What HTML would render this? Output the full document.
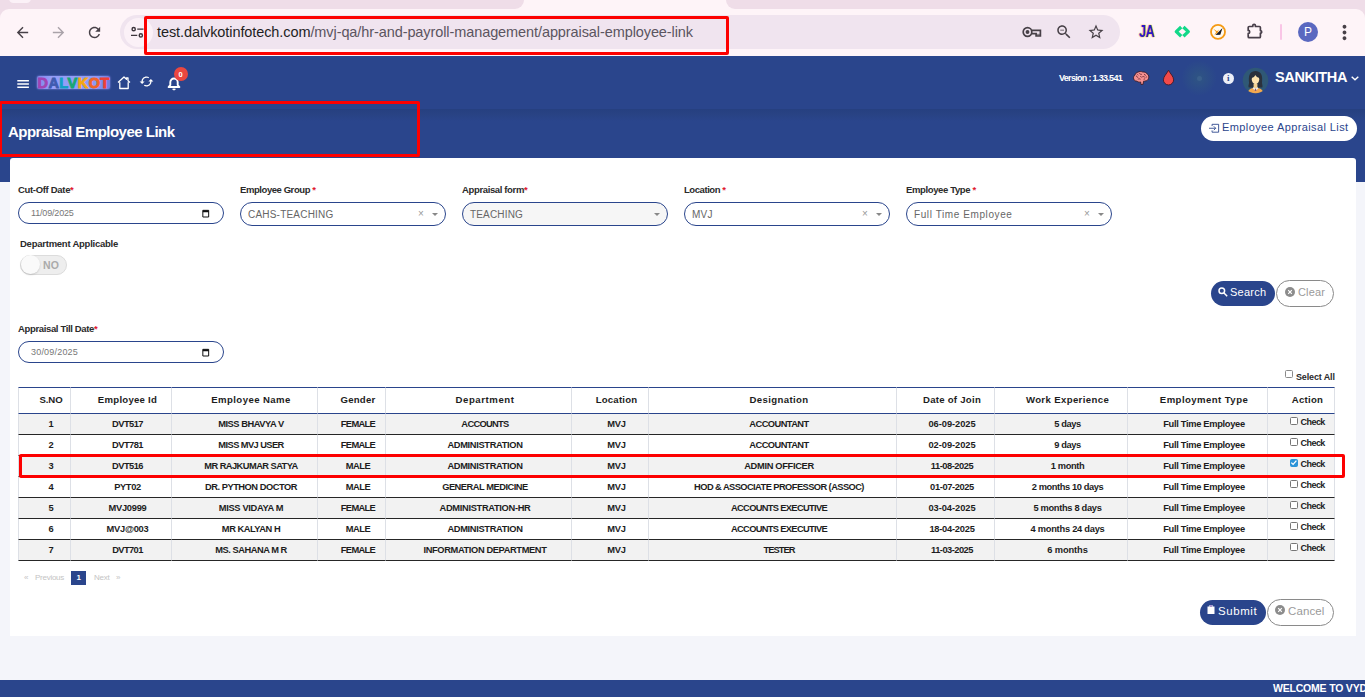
<!DOCTYPE html>
<html lang="en">
<head>
<meta charset="utf-8">
<title>Appraisal Employee Link</title>
<style>
*{box-sizing:border-box;margin:0;padding:0}
html,body{width:1365px;height:697px;overflow:hidden}
body{position:relative;background:#f4f5fa;font-family:"Liberation Sans",sans-serif;color:#222}
.abs{position:absolute}
.t{position:absolute;white-space:nowrap;line-height:1}
/* browser chrome */
#toolbar{left:0;top:9px;width:1365px;height:47px;background:#fef4f8;border-radius:9px 9px 0 0}
#pill{left:120px;top:15px;width:1000px;height:34px;border-radius:17px;background:#f0e4ef}
#siteinfo{left:123.500px;top:17.500px;width:29px;height:29px;border-radius:15px;background:#fbf1f7}
#url{left:157px;top:25px;font-size:14.5px;color:#1f1f1f;letter-spacing:0}
#url span{color:#5b5560}
/* app */
#apphdr{left:0;top:56px;width:1365px;height:52px;background:#2a458c}
#subhdr{left:0;top:108px;width:1365px;height:74px;background:#2a458c}
#shadow{left:0;top:108.500px;width:1365px;height:12px;background:linear-gradient(#264080,#284283 40%,#2a458c)}
#card{left:10px;top:158px;width:1346px;height:478px;background:#fff;border-radius:3px 3px 0 0}
#footer{left:0;top:680px;width:1365px;height:17px;background:#2a458c}

.ts{position:absolute;top:0;height:9px;background:#efdde8}
#tabbg{left:0;top:0;width:1365px;height:20px;background:#efdde8}
#acttab{left:510px;top:0;width:230px;height:12px;background:#fef4f8}
svg{position:absolute;overflow:visible}
.w{color:#fff}

.lbl{position:absolute;white-space:nowrap;line-height:1;font-size:9.500px;font-weight:bold;color:#2b2b2b}
.lbl b{color:#e0182d}
.inp{position:absolute;width:206px;height:22px;border:1px solid #2a458c;border-radius:11px;background:#fff}
.sel{position:absolute;width:206px;height:24px;border:1px solid #2a458c;border-radius:12px;background:#fff}
.val{position:absolute;white-space:nowrap;line-height:1;font-size:10px;color:#666}
.dval{position:absolute;white-space:nowrap;line-height:1;font-size:9px;color:#777;letter-spacing:-0.300px}
.x{position:absolute;white-space:nowrap;line-height:1;font-size:10px;color:#999}
.car{position:absolute;width:0;height:0;border-left:3px solid transparent;border-right:3px solid transparent;border-top:3.500px solid #888}
.btn{position:absolute;border-radius:13px}

#tbl{position:absolute;left:18px;top:387px;width:1317px;border-collapse:separate;border-spacing:0;table-layout:fixed}
#tbl th{height:27px;padding:0 0 3px 13px;border-top:1px solid #2a458c;border-bottom:1px solid #2a458c;border-left:1px solid #dde0e6;font-size:9.600px;font-weight:bold;color:#1d1d1d;text-align:center;white-space:nowrap;letter-spacing:0.200px}
#tbl td{height:21px;padding:1.500px 0 0 13px;border-bottom:1px solid #262626;border-left:1px solid #dde0e6;font-size:9.300px;font-weight:bold;color:#1d1d1d;text-align:center;white-space:nowrap;letter-spacing:-0.300px;line-height:1}
#tbl tr.o td{background:#f2f2f2}
#tbl td:last-child{position:relative}
#tbl th:last-child,#tbl td:last-child{border-right:1px solid #dde0e6}
.cb{position:absolute;left:21.700px;top:3px;width:8px;height:8px;border:0.800px solid #767676;border-radius:1.500px;background:#fff}
.cb.on{background:#2b93d8;border-color:#2b93d8}
.ck{position:absolute;left:32.600px;top:3.800px;font-size:9px;line-height:1}
.pg{position:absolute;white-space:nowrap;line-height:1;font-size:8px;color:#c4c4c4}
.red{position:absolute;border:3px solid #fd0000;border-radius:2px}
</style>
</head>
<body>

<div id="tabbg" class="abs"></div>
<div id="acttab" class="abs"></div>
<div class="ts" style="left:0;width:524px;border-bottom-right-radius:9px"></div>
<div class="ts" style="left:726px;width:639px;border-bottom-left-radius:9px"></div>
<div class="abs" style="left:9px;top:-6px;width:22px;height:9px;border-radius:5px;background:#fbf1f7"></div>

<div id="toolbar" class="abs"></div>
<div id="pill" class="abs"></div>
<div id="siteinfo" class="abs"></div>
<div id="url" class="t" style="letter-spacing:-0.089px">test.dalvkotinfotech.com<span>/mvj-qa/hr-and-payroll-management/appraisal-employee-link</span></div>

<div id="apphdr" class="abs"></div>
<div id="subhdr" class="abs"></div>
<div id="shadow" class="abs"></div>
<div id="card" class="abs"></div>
<div id="footer" class="abs"></div>


<!-- browser toolbar icons -->
<svg style="left:13.500px;top:23.500px" width="17" height="17" viewBox="0 0 24 24"><path fill="#474047" d="M20 11H7.83l5.59-5.59L12 4l-8 8 8 8 1.41-1.41L7.83 13H20v-2z"/></svg>
<svg style="left:49.500px;top:23.500px" width="17" height="17" viewBox="0 0 24 24"><path fill="#aaa2a9" d="M12 4l-1.41 1.41L16.17 11H4v2h12.17l-5.58 5.59L12 20l8-8z"/></svg>
<svg style="left:85.500px;top:23.500px" width="17" height="17" viewBox="0 0 24 24"><path fill="#474047" d="M17.65 6.35C16.2 4.9 14.21 4 12 4c-4.42 0-7.99 3.58-7.99 8s3.57 8 7.99 8c3.73 0 6.84-2.55 7.73-6h-2.08c-.82 2.33-3.04 4-5.65 4-3.31 0-6-2.69-6-6s2.69-6 6-6c1.66 0 3.14.69 4.22 1.78L13 11h7V4l-2.35 2.35z"/></svg>
<svg style="left:131px;top:25.500px" width="12.500" height="12.500" viewBox="0 0 14 14" fill="none" stroke="#3c353c" stroke-width="1.6"><circle cx="3" cy="3.5" r="1.8"/><path d="M7 3.5h7M0 10.5h7"/><circle cx="11" cy="10.5" r="1.8"/></svg>
<!-- key -->
<svg style="left:1022px;top:25px" width="20" height="14" viewBox="0 0 20 14" fill="none" stroke="#474047" stroke-width="1.700"><circle cx="5.500" cy="7" r="4.300"/><circle cx="5.500" cy="7" r="1.100" fill="#474047"/><path d="M14.300 8.800h3.800v2h-3.800z" fill="#8d868d" stroke="none"/><path d="M9.700 5.400H18.400V11H14.100V8.700H9.800"/></svg>
<svg style="left:1055px;top:23px" width="18" height="18" viewBox="0 0 24 24"><path fill="#474047" d="M15.5 14h-.79l-.28-.27C15.41 12.59 16 11.11 16 9.5 16 5.91 13.09 3 9.5 3S3 5.91 3 9.5 5.91 16 9.5 16c1.61 0 3.09-.59 4.23-1.57l.27.28v.79l5 4.99L20.49 19l-4.99-5zm-6 0C7.01 14 5 11.99 5 9.5S7.01 5 9.5 5 14 7.01 14 9.5 11.99 14 9.5 14zM7 9h5v1H7z"/></svg>
<svg style="left:1087px;top:23px" width="18" height="18" viewBox="0 0 24 24"><path fill="#474047" d="M22 9.24l-7.19-.62L12 2 9.19 8.63 2 9.24l5.46 4.73L5.82 21 12 17.27 18.18 21l-1.63-7.03L22 9.24zM12 15.4l-3.76 2.27 1-4.28-3.32-2.88 4.38-.38L12 6.1l1.71 4.04 4.38.38-3.32 2.88 1 4.28L12 15.4z"/></svg>
<div class="t" style="left:1138.500px;top:24px;font-size:16px;font-weight:bold;color:#2a18cc;letter-spacing:-0.500px;transform:scaleX(0.780);transform-origin:0 0;text-shadow:0 0 1px #e6c030,0 0 1px #e6c030,0 0 1.500px #e6c030">JA</div>
<svg style="left:1173px;top:24px" width="18" height="16" viewBox="0 0 18 16" fill="none" stroke="#12d889" stroke-width="3.300" stroke-linejoin="round"><path d="M8.200 3L3.300 7.600 8.200 12.200M10.400 3L15.300 7.600 10.400 12.200"/></svg>
<svg style="left:1209px;top:23px" width="18" height="18" viewBox="0 0 18 18"><circle cx="9" cy="8.900" r="7" fill="#fffaf2" stroke="#f59a14" stroke-width="1.800"/><path d="M4.300 5.800l3.800 2.400 1.700-1.700-1 3-3.500 2.700 1.800-3.200z" fill="#f59a14"/><path d="M13.500 5L11.300 11.800 6.500 12z" fill="#1c1c26"/></svg>
<svg style="left:1244px;top:20px" width="22" height="22" viewBox="0 0 22 22" fill="none" stroke="#483e49" stroke-width="1.700" stroke-linejoin="round"><path d="M4.200 7.500a1 1 0 0 1 1-1H8.800V5.600a1.300 1.300 0 0 1 2.600 0V6.500H15.400a1 1 0 0 1 1 1V10.600a1.300 1.300 0 0 1 0 2.600V16.700a1 1 0 0 1-1 1H5.200a1 1 0 0 1-1-1V13.400a1.500 1.500 0 0 0 0-3z"/></svg>
<div class="abs" style="left:1280px;top:24px;width:2px;height:16px;background:#f9c5e6;border-radius:1px"></div>
<div class="abs" style="left:1298px;top:22px;width:20px;height:20px;border-radius:10px;background:#5a68c0"></div>
<div class="t" style="left:1304px;top:26px;font-size:12px;color:#fff">P</div>
<svg style="left:1332.500px;top:20.500px" width="23" height="23" viewBox="0 0 24 24"><path fill="#474047" d="M12 8c1.100 0 2-.9 2-2s-.9-2-2-2-2 .9-2 2 .9 2 2 2zm0 2c-1.100 0-2 .9-2 2s.9 2 2 2 2-.9 2-2-.9-2-2-2zm0 6c-1.100 0-2 .9-2 2s.9 2 2 2 2-.9 2-2-.9-2-2-2z"/></svg>


<!-- app header -->
<svg style="left:17px;top:79.500px" width="13" height="9" viewBox="0 0 13 9" stroke="#fff" stroke-width="1.350"><path d="M0.300 0.700h11.600M0.300 3.950h11.600M0.300 7.200h11.600"/></svg>
<div class="abs" style="left:37px;top:76px;width:73px;height:13px;border-radius:2px;background:linear-gradient(90deg,#7f86e8,#959ff8 20%,#8e9bf6 80%,#6f7ce0);box-shadow:0 0 2px #8f9af5"></div>
<div class="t" id="logo" style="left:37.500px;top:75.500px;font-size:14.500px;font-weight:bold;letter-spacing:0.450px;-webkit-text-stroke-width:0.900px"><span style="color:#a044b4">D</span><span style="color:#3f5bb0">A</span><span style="color:#14a0c4">L</span><span style="color:#17a673">V</span><span style="color:#f3a712">K</span><span style="color:#f0632a">O</span><span style="color:#ee4035">T</span></div>
<svg style="left:117px;top:75.500px" width="14" height="14" viewBox="0 0 14 14" fill="none" stroke="#fff" stroke-width="1.300" stroke-linejoin="round"><path d="M1 6.500L7 1l2.500 2.300V1.800h1.500v2.900L13 6.500M2.800 6.200v6.300h8.400V6.200"/></svg>
<svg style="left:139px;top:74px" width="15" height="15" viewBox="0 0 24 24"><path fill="#fff" d="M12 4V1L8 5l4 4V6c3.310 0 6 2.690 6 6 0 1.010-.25 1.970-.7 2.800l1.460 1.460C19.540 15.030 20 13.570 20 12c0-4.420-3.580-8-8-8zm0 14c-3.310 0-6-2.690-6-6 0-1.010.25-1.970.7-2.800L5.240 7.740C4.460 8.970 4 10.430 4 12c0 4.420 3.580 8 8 8v3l4-4-4-4v3z" transform="rotate(90 12 12)"/></svg>
<svg style="left:166.500px;top:76px" width="14" height="15" viewBox="0 0 14 15" fill="none" stroke="#fff" stroke-width="1.900" stroke-linejoin="round"><path d="M1.600 11h10.800l-1.700-2V6.200a3.700 3.700 0 0 0-7.400 0V9z"/><path d="M5.600 13a1.500 1.500 0 0 0 2.800 0z" fill="#fff" stroke-width="0.800"/></svg>
<div class="abs" style="left:174px;top:67px;width:14px;height:14px;border-radius:7px;background:#ea4740"></div>
<div class="t" style="left:178.500px;top:70.500px;font-size:7.500px;font-weight:bold;color:#fff">0</div>

<div class="t w" id="ver" style="left:1059px;top:73.800px;font-size:9px;font-weight:bold;letter-spacing:-0.697px">Version : 1.33.541</div>
<!-- brain -->
<svg style="left:1132.800px;top:70.600px" width="16.500" height="14.600" viewBox="0 0 17 15"><path d="M5 1.200C6.500 0.300 8.500 0.300 10 1c2-.3 4 .7 4.800 2.300 1.400.8 1.900 2.700 1.200 4.200-.3 1.600-1.700 2.700-3.300 2.700-.5.300-1.200.4-1.800.3l-.5 3.200-2.200.2-.3-2.600c-1.300.4-2.800.1-3.700-.8C2.500 10.600 1.100 9.700.7 8.200.2 6.600.8 4.900 2.100 4 2.400 2.700 3.500 1.500 5 1.200z" fill="#f49090" stroke="#3a1a26" stroke-width="0.900"/><path d="M3 5c1 .2 1.800 1 2 2M6.500 2.200c.5 1 1.700 1.500 2.700 1.200M9.500 6c1-.6 2.400-.3 3 .7M5 8.500c.8-.6 2-.6 2.800 0M11.500 3c.2.800.9 1.400 1.700 1.500M7.500 5.500l1.500 1M11 8.500l1.500-.5M4.500 3.500l1 .8M13.500 6l1 .3" fill="none" stroke="#6e2b35" stroke-width="0.900"/></svg>
<!-- drop -->
<svg style="left:1161.500px;top:69.200px" width="13" height="17" viewBox="0 0 14 17"><path d="M7 0.800C9 4.500 12.500 7.500 12.500 11A5.500 5.500 0 0 1 1.500 11C1.500 7.500 5 4.500 7 0.800z" fill="#f24a4a" stroke="#3a1420" stroke-width="0.900"/></svg>
<div class="abs" style="left:1181px;top:60px;width:36px;height:36px;border-radius:18px;background:radial-gradient(circle,#2f5583 0,#2c4c88 40%,#2a458c 70%)"></div>
<div class="abs" style="left:1197px;top:76px;width:5px;height:5px;border-radius:3px;background:#3a5f8c"></div>
<div class="abs" style="left:1223px;top:73px;width:11px;height:11px;border-radius:6px;background:#eceff8"></div>
<div class="t" style="left:1227px;top:74px;font-size:9px;font-weight:bold;color:#2a458c;font-family:'Liberation Serif',serif">i</div>
<!-- avatar -->
<svg style="left:1241.800px;top:66.500px" width="27" height="27" viewBox="0 0 27 27"><defs><clipPath id="avc"><circle cx="13.500" cy="13.500" r="12.800"/></clipPath></defs><circle cx="13.500" cy="13.500" r="12.800" fill="#2f5876"/><g clip-path="url(#avc)"><path d="M6.800 20.500c-1-1.500.3-3 .2-5-.2-3-.5-6.500 1-8.800 1.200-2 3.500-2.800 5.500-2.800s4.300.8 5.500 2.800c1.500 2.300 1.200 5.800 1 8.800-.1 2 1.200 3.500.2 5z" fill="#2b313c"/><path d="M5.800 27c0-4 2.200-6.300 7.700-6.300s7.700 2.300 7.700 6.300z" fill="#f4a84e"/><path d="M11.600 17h3.800v3.800l-1.900 2.600-1.900-2.600z" fill="#f5d293"/><path d="M11.200 20.200l2.300 1.200 2.300-1.200.5 1.300-2.800 2.300-2.800-2.300z" fill="#f1eee9"/><path d="M13 21.800h1l.3 2.200h-1.600z" fill="#8a5a78"/><ellipse cx="13.500" cy="12.300" rx="3.700" ry="5" fill="#fee3ae"/><path d="M9.700 11c1.800-.3 3-1.500 3.600-3 .8 1.500 2.400 2.600 4.100 3-.1-3.400-1.600-5.300-3.900-5.300S9.800 7.600 9.700 11z" fill="#2b313c"/></g></svg>
<div class="t w" id="uname" style="left:1275px;top:70px;font-size:14.500px;font-weight:bold;letter-spacing:-0.365px">SANKITHA</div>
<svg style="left:1351px;top:75.500px" width="8" height="5" viewBox="0 0 8 5" fill="none" stroke="#fff" stroke-width="1.400"><path d="M0.700 0.700L4 3.800 7.300 0.700"/></svg>

<!-- sub header -->
<div class="t w" id="ptitle" style="left:8px;top:123.500px;font-size:15px;font-weight:bold;letter-spacing:-0.517px">Appraisal Employee Link</div>
<div class="abs" style="left:1201px;top:116px;width:156px;height:25px;border-radius:13px;background:#fff"></div>
<svg style="left:1209px;top:122.500px" width="10.500" height="10.500" viewBox="0 0 12 12" fill="none" stroke="#2a458c" stroke-width="1"><path d="M3.500 3.500v-2h7.500v9H3.500v-2M0 6h7.500M5.500 3.800L7.700 6 5.500 8.200"/></svg>
<div class="t" id="eal" style="left:1222px;top:122px;font-size:11px;color:#2a458c;letter-spacing:0.395px">Employee Appraisal List</div>


<!-- form -->
<div class="lbl" id="l1" style="left:18px;top:185px;letter-spacing:-0.32px">Cut-Off Date<b>*</b></div>
<div class="lbl" id="l2" style="left:240px;top:185px;letter-spacing:-0.429px">Employee Group <b>*</b></div>
<div class="lbl" id="l3" style="left:462px;top:185px;letter-spacing:-0.363px">Appraisal form<b>*</b></div>
<div class="lbl" id="l4" style="left:684px;top:185px;letter-spacing:-0.434px">Location <b>*</b></div>
<div class="lbl" id="l5" style="left:906px;top:185px;letter-spacing:-0.37px">Employee Type <b>*</b></div>

<div class="inp" style="left:18px;top:202px"></div>
<div class="dval" id="d1" style="left:31px;top:208.500px;letter-spacing:-0.169px">11/09/2025</div>
<svg style="left:202px;top:208.500px" width="7.500" height="8.500" viewBox="0 0 9 10"><path d="M1 1.500h7v8H1z" fill="none" stroke="#111" stroke-width="1.200"/><path d="M1 1.500h7v2.300H1z" fill="#111"/></svg>

<div class="sel" style="left:240px;top:202px"></div>
<div class="val" id="v2" style="left:248px;top:209.800px;letter-spacing:0.208px">CAHS-TEACHING</div>
<div class="x" style="left:418px;top:208.500px">×</div><div class="car" style="left:432px;top:213px"></div>

<div class="sel" style="left:462px;top:202px;background:#f6f6f6"></div>
<div class="val" id="v3" style="left:470px;top:209.800px;letter-spacing:0.166px">TEACHING</div>
<div class="car" style="left:654px;top:213px"></div>

<div class="sel" style="left:684px;top:202px"></div>
<div class="val" id="v4" style="left:692px;top:209.800px;letter-spacing:0.233px">MVJ</div>
<div class="x" style="left:862px;top:208.500px">×</div><div class="car" style="left:876px;top:213px"></div>

<div class="sel" style="left:906px;top:202px"></div>
<div class="val" id="v5" style="left:914px;top:209.800px;letter-spacing:0.594px">Full Time Employee</div>
<div class="x" style="left:1084px;top:208.500px">×</div><div class="car" style="left:1098px;top:213px"></div>

<div class="lbl" id="l6" style="left:20px;top:239px;letter-spacing:-0.244px">Department Applicable</div>
<div class="abs" style="left:20px;top:255px;width:47px;height:20px;border-radius:10px;background:#eee;border:1px solid #dcdcdc"></div>
<div class="abs" style="left:21px;top:255px;width:19px;height:19px;border-radius:10px;background:#fafafa;box-shadow:0 1px 2px rgba(0,0,0,.15)"></div>
<div class="t" id="no" style="left:43px;top:260px;font-size:10.500px;font-weight:bold;color:#aaa;letter-spacing:0.125px">NO</div>

<div class="btn" style="left:1211px;top:281px;width:64px;height:25px;background:#2a458c"></div>
<svg style="left:1218px;top:287px" width="10" height="10" viewBox="0 0 10 10" fill="none" stroke="#fff" stroke-width="1.500"><circle cx="3.800" cy="3.800" r="2.800"/><path d="M6 6l3.200 3.200"/></svg>
<div class="t w" id="bsearch" style="left:1230px;top:287px;font-size:11px;letter-spacing:0.257px">Search</div>
<div class="btn" style="left:1276px;top:280px;width:58px;height:27px;background:#fff;border:1px solid #8a8a8a;border-radius:14px"></div>
<svg style="left:1285px;top:287px" width="10" height="10" viewBox="0 0 10 10"><circle cx="5" cy="5" r="5" fill="#8c8c8c"/><path d="M3.200 3.200l3.600 3.600M6.800 3.200L3.200 6.800" stroke="#fff" stroke-width="1.200"/></svg>
<div class="t" id="bclear" style="left:1298px;top:287px;font-size:11px;color:#9a9a9a;letter-spacing:0.141px">Clear</div>

<div class="lbl" id="l7" style="left:18px;top:324px;letter-spacing:-0.351px">Appraisal Till Date<b>*</b></div>
<div class="inp" style="left:18px;top:341px"></div>
<div class="dval" id="d2" style="left:31px;top:347.500px;letter-spacing:0.195px">30/09/2025</div>
<svg style="left:202px;top:347.500px" width="7.500" height="8.500" viewBox="0 0 9 10"><path d="M1 1.500h7v8H1z" fill="none" stroke="#111" stroke-width="1.200"/><path d="M1 1.500h7v2.300H1z" fill="#111"/></svg>

<div class="abs" style="left:1285px;top:370px;width:8px;height:8px;border:1px solid #8a8a8a;border-radius:1.500px;background:#fff"></div>
<div class="lbl" id="selall" style="left:1296px;top:372.500px;font-size:9px;letter-spacing:-0.139px">Select All</div>

<table id="tbl"><colgroup><col style="width:52px"><col style="width:101px"><col style="width:146px"><col style="width:68px"><col style="width:186px"><col style="width:77px"><col style="width:248px"><col style="width:98px"><col style="width:133px"><col style="width:140px"><col style="width:68px"></colgroup>
<thead><tr><th><span id="h0" style="letter-spacing:-0.067px">S.NO</span></th><th><span id="h1" style="letter-spacing:0.253px">Employee Id</span></th><th><span id="h2" style="letter-spacing:0.413px">Employee Name</span></th><th><span id="h3" style="letter-spacing:0.201px">Gender</span></th><th><span id="h4" style="letter-spacing:0.569px">Department</span></th><th><span id="h5" style="letter-spacing:0.214px">Location</span></th><th><span id="h6" style="letter-spacing:0.372px">Designation</span></th><th><span id="h7" style="letter-spacing:0.258px">Date of Join</span></th><th><span id="h8" style="letter-spacing:0.368px">Work Experience</span></th><th><span id="h9" style="letter-spacing:0.432px">Employment Type</span></th><th><span id="h10" style="letter-spacing:0.273px">Action</span></th></tr></thead>
<tbody>
<tr class="o"><td><span id="c0_0">1</span></td><td><span id="c0_1" style="letter-spacing:-0.535px">DVT517</span></td><td><span id="c0_2" style="letter-spacing:-0.451px">MISS BHAVYA V</span></td><td><span id="c0_3" style="letter-spacing:-0.653px">FEMALE</span></td><td><span id="c0_4" style="letter-spacing:-0.673px">ACCOUNTS</span></td><td><span id="c0_5" style="letter-spacing:-0.275px">MVJ</span></td><td><span id="c0_6" style="letter-spacing:-0.561px">ACCOUNTANT</span></td><td><span id="c0_7" style="letter-spacing:-0.056px">06-09-2025</span></td><td><span id="c0_8" style="letter-spacing:-0.426px">5 days</span></td><td><span id="c0_9" style="letter-spacing:-0.302px">Full Time Employee</span></td><td><span class="cb"></span><span class="ck" id="c0_10" style="letter-spacing:-0.563px">Check</span></td></tr>
<tr><td><span id="c1_0">2</span></td><td><span id="c1_1" style="letter-spacing:-0.535px">DVT781</span></td><td><span id="c1_2" style="letter-spacing:-0.58px">MISS MVJ USER</span></td><td><span id="c1_3" style="letter-spacing:-0.653px">FEMALE</span></td><td><span id="c1_4" style="letter-spacing:-0.335px">ADMINISTRATION</span></td><td><span id="c1_5" style="letter-spacing:-0.275px">MVJ</span></td><td><span id="c1_6" style="letter-spacing:-0.561px">ACCOUNTANT</span></td><td><span id="c1_7" style="letter-spacing:-0.056px">02-09-2025</span></td><td><span id="c1_8" style="letter-spacing:-0.376px">9 days</span></td><td><span id="c1_9" style="letter-spacing:-0.302px">Full Time Employee</span></td><td><span class="cb"></span><span class="ck" id="c1_10" style="letter-spacing:-0.563px">Check</span></td></tr>
<tr class="o"><td><span id="c2_0">3</span></td><td><span id="c2_1" style="letter-spacing:-0.535px">DVT516</span></td><td><span id="c2_2" style="letter-spacing:-0.553px">MR RAJKUMAR SATYA</span></td><td><span id="c2_3" style="letter-spacing:-0.461px">MALE</span></td><td><span id="c2_4" style="letter-spacing:-0.335px">ADMINISTRATION</span></td><td><span id="c2_5" style="letter-spacing:-0.275px">MVJ</span></td><td><span id="c2_6" style="letter-spacing:-0.328px">ADMIN OFFICER</span></td><td><span id="c2_7" style="letter-spacing:-0.475px">11-08-2025</span></td><td><span id="c2_8" style="letter-spacing:-0.394px">1 month</span></td><td><span id="c2_9" style="letter-spacing:-0.302px">Full Time Employee</span></td><td><span class="cb on"><svg style="left:-0.500px;top:-0.800px" width="8" height="8" viewBox="0 0 8 8" fill="none" stroke="#fff" stroke-width="1.300"><path d="M1.300 3.600l1.800 1.800 3.300-3.800"/></svg></span><span class="ck" id="c2_10" style="letter-spacing:-0.563px">Check</span></td></tr>
<tr><td><span id="c3_0">4</span></td><td><span id="c3_1" style="letter-spacing:-0.344px">PYT02</span></td><td><span id="c3_2" style="letter-spacing:-0.462px">DR. PYTHON DOCTOR</span></td><td><span id="c3_3" style="letter-spacing:-0.461px">MALE</span></td><td><span id="c3_4" style="letter-spacing:-0.477px">GENERAL MEDICINE</span></td><td><span id="c3_5" style="letter-spacing:-0.275px">MVJ</span></td><td><span id="c3_6" style="letter-spacing:-0.568px">HOD &amp; ASSOCIATE PROFESSOR (ASSOC)</span></td><td><span id="c3_7" style="letter-spacing:-0.376px">01-07-2025</span></td><td><span id="c3_8" style="letter-spacing:-0.408px">2 months 10 days</span></td><td><span id="c3_9" style="letter-spacing:-0.302px">Full Time Employee</span></td><td><span class="cb"></span><span class="ck" id="c3_10" style="letter-spacing:-0.563px">Check</span></td></tr>
<tr class="o"><td><span id="c4_0">5</span></td><td><span id="c4_1" style="letter-spacing:-0.245px">MVJ0999</span></td><td><span id="c4_2" style="letter-spacing:-0.34px">MISS VIDAYA M</span></td><td><span id="c4_3" style="letter-spacing:-0.653px">FEMALE</span></td><td><span id="c4_4" style="letter-spacing:-0.318px">ADMINISTRATION-HR</span></td><td><span id="c4_5" style="letter-spacing:-0.275px">MVJ</span></td><td><span id="c4_6" style="letter-spacing:-0.665px">ACCOUNTS EXECUTIVE</span></td><td><span id="c4_7" style="letter-spacing:-0.036px">03-04-2025</span></td><td><span id="c4_8" style="letter-spacing:-0.317px">5 months 8 days</span></td><td><span id="c4_9" style="letter-spacing:-0.302px">Full Time Employee</span></td><td><span class="cb"></span><span class="ck" id="c4_10" style="letter-spacing:-0.563px">Check</span></td></tr>
<tr><td><span id="c5_0">6</span></td><td><span id="c5_1" style="letter-spacing:-0.272px">MVJ@003</span></td><td><span id="c5_2" style="letter-spacing:-0.461px">MR KALYAN H</span></td><td><span id="c5_3" style="letter-spacing:-0.461px">MALE</span></td><td><span id="c5_4" style="letter-spacing:-0.335px">ADMINISTRATION</span></td><td><span id="c5_5" style="letter-spacing:-0.275px">MVJ</span></td><td><span id="c5_6" style="letter-spacing:-0.665px">ACCOUNTS EXECUTIVE</span></td><td><span id="c5_7" style="letter-spacing:-0.236px">18-04-2025</span></td><td><span id="c5_8" style="letter-spacing:-0.246px">4 months 24 days</span></td><td><span id="c5_9" style="letter-spacing:-0.302px">Full Time Employee</span></td><td><span class="cb"></span><span class="ck" id="c5_10" style="letter-spacing:-0.563px">Check</span></td></tr>
<tr class="o"><td><span id="c6_0">7</span></td><td><span id="c6_1" style="letter-spacing:-0.585px">DVT701</span></td><td><span id="c6_2" style="letter-spacing:-0.462px">MS. SAHANA M R</span></td><td><span id="c6_3" style="letter-spacing:-0.653px">FEMALE</span></td><td><span id="c6_4" style="letter-spacing:-0.38px">INFORMATION DEPARTMENT</span></td><td><span id="c6_5" style="letter-spacing:-0.275px">MVJ</span></td><td><span id="c6_6" style="letter-spacing:-0.915px">TESTER</span></td><td><span id="c6_7" style="letter-spacing:-0.525px">11-03-2025</span></td><td><span id="c6_8" style="letter-spacing:-0.116px">6 months</span></td><td><span id="c6_9" style="letter-spacing:-0.302px">Full Time Employee</span></td><td><span class="cb"></span><span class="ck" id="c6_10" style="letter-spacing:-0.563px">Check</span></td></tr>
</tbody></table>

<div class="pg" style="left:24px;top:574px">«</div>
<div class="pg" id="pprev" style="left:35px;top:574px;letter-spacing:-0.266px">Previous</div>
<div class="abs" style="left:71px;top:571px;width:15px;height:14px;background:#2a458c"></div>
<div class="t w" style="left:76.500px;top:574px;font-size:8px;font-weight:bold">1</div>
<div class="pg" id="pnext" style="left:94px;top:574px;letter-spacing:-0.238px">Next</div>
<div class="pg" style="left:116px;top:574px">»</div>

<div class="btn" style="left:1200px;top:600px;width:66px;height:25px;background:#2a458c"></div>
<svg style="left:1206px;top:604px" width="10" height="11" viewBox="0 0 10 11"><path d="M1.500 2.500h2V1h3v1.500h2V10h-7z" fill="#fff"/><path d="M4 1.300h2v1.500H4z" fill="#8a6fc0"/></svg>
<div class="t w" id="bsubmit" style="left:1218px;top:605.500px;font-size:11.500px;letter-spacing:0.567px">Submit</div>
<div class="btn" style="left:1267px;top:599px;width:67px;height:27px;background:#fff;border:1px solid #8a8a8a;border-radius:14px"></div>
<svg style="left:1275px;top:605px" width="10" height="10" viewBox="0 0 10 10"><circle cx="5" cy="5" r="5" fill="#8c8c8c"/><path d="M3.200 3.200l3.600 3.600M6.800 3.200L3.200 6.800" stroke="#fff" stroke-width="1.200"/></svg>
<div class="t" id="bcancel" style="left:1288px;top:605.500px;font-size:11.500px;color:#9a9a9a;letter-spacing:0.098px">Cancel</div>

<div class="t w" id="foot" style="left:1273px;top:682.500px;font-size:10.500px;font-weight:bold;letter-spacing:-0.200px">WELCOME TO VYDEHI</div>

<!--CONTENT-->

<div class="red" style="left:144px;top:16px;width:585px;height:39px"></div>
<div class="red" style="left:-1px;top:101px;width:421px;height:56px"></div>
<div class="red" style="left:19px;top:454px;width:1326px;height:24px"></div>
</body>
</html>
